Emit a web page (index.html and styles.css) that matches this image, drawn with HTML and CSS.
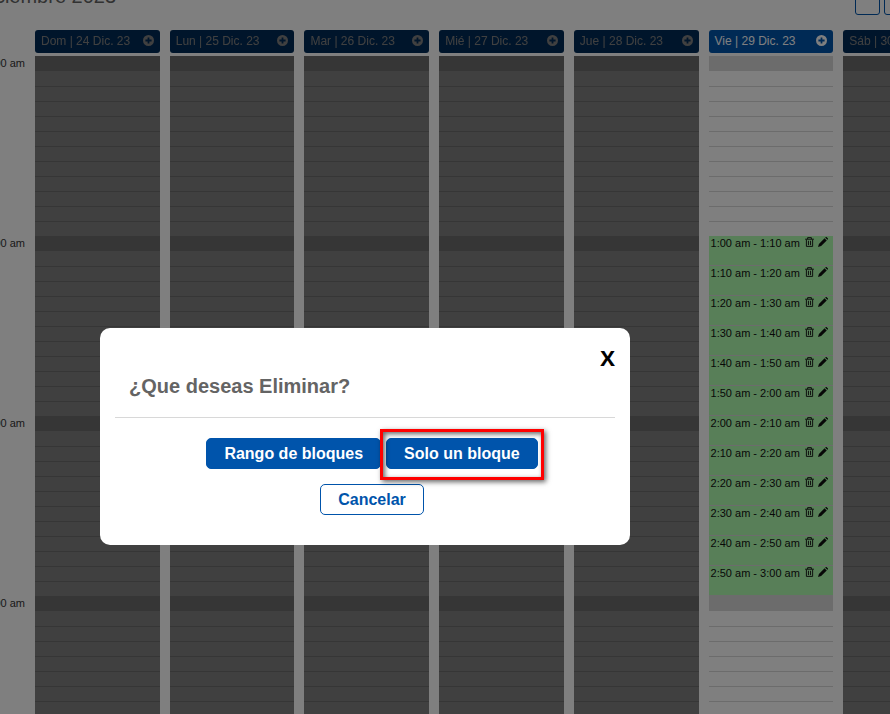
FILE: index.html
```html
<!DOCTYPE html>
<html lang="es">
<head>
    <meta charset="utf-8">
    <title>Agenda</title>
    <link rel="stylesheet" href="styles.css">
</head>
<body>
    <svg class="sprite" aria-hidden="true">
        <symbol id="plus" viewBox="0 0 16 16">
            <path fill-rule="evenodd" d="M8 0a8 8 0 1 0 0 16A8 8 0 0 0 8 0zM6.7 3.5h2.6v3.2h3.2v2.6H9.3v3.2H6.7V9.3H3.5V6.7h3.2z"/>
        </symbol>
        <symbol id="trash" viewBox="0 0 14 16">
            <path fill="none" stroke="currentColor" stroke-width="1.5" d="M0 3.5h14M4 3.5V1h6v2.5M2 4v11h10V4M5.3 6v7M8.7 6v7"/>
        </symbol>
        <symbol id="pencil" viewBox="0 0 16 16">
            <path d="M10.5 2L14 5.500 5 14.500 0 16l1.500-5zM11.500 1l1-1h1L16 2.500v1l-1 1z"/>
        </symbol>
    </svg>

    <div class="agenda">
        <div class="toolbar">
            <h1>Diciembre 2023</h1>
            <div class="toolbar-buttons">
                <button type="button" aria-label="Anterior"></button>
                <button type="button" aria-label="Siguiente"></button>
                <button type="button" aria-label="Hoy"></button>
                <button type="button" aria-label="Mes"></button>
            </div>
        </div>
        <div class="calendar">
            <div class="hours">
                <span>12:00 am</span>
                <span>1:00 am</span>
                <span>2:00 am</span>
                <span>3:00 am</span>
            </div>
            <div class="week" id="week"></div>
        </div>
    </div>

    <div class="overlay">
        <div class="modal" role="dialog" aria-modal="true" aria-labelledby="modal-title">
            <button type="button" class="close">X</button>
            <h2 id="modal-title">¿Que deseas Eliminar?</h2>
            <div class="modal-buttons">
                <button type="button" class="btn">Rango de bloques</button>
                <span class="highlight"><button type="button" class="btn">Solo un bloque</button></span>
                <button type="button" class="btn btn-outline">Cancelar</button>
            </div>
        </div>
    </div>

    <script src="script.js"></script>
</body>
</html>
```
FILE: styles.css
```css
* {
    box-sizing: border-box;
}
body {
    margin: 0;
    height: 100vh;
    overflow: hidden;
    background: white;
    font-family: "Liberation Sans", Arial, sans-serif;
}
button {
    font-family: inherit;
    cursor: pointer;
}
.sprite {
    display: none;
}

/* Calendar */
.agenda {
    min-width: 992px;
    margin: -16px 0 0 -24px;
}
.toolbar {
    display: flex;
    justify-content: space-between;
    height: 31px;
    margin-bottom: 15px;
    padding-right: 1px;
}
.toolbar h1 {
    margin: 0;
    font-size: 20px;
    line-height: 24px;
    font-weight: normal;
    color: #646464;
}
.toolbar-buttons {
    display: flex;
    gap: 4px;
}
.toolbar-buttons button {
    width: 25px;
    background: white;
    border: 1px solid #0054ab;
    border-radius: 3px;
}
.calendar {
    display: flex;
}
.hours {
    width: 59px;
    padding: 26px 10px 0 0;
    text-align: right;
    font-size: 11px;
    line-height: 15px;
    color: #333;
}
.hours span {
    display: block;
    height: 180px;
}
.week {
    flex: 1;
    display: grid;
    grid-template-columns: repeat(7, 1fr);
    gap: 10px;
}
.day.disabled {
    filter: brightness(0.5);
}
.day-header {
    display: flex;
    justify-content: space-between;
    align-items: center;
    height: 23px;
    margin-bottom: 3px;
    padding: 0 6px 2px;
    border-radius: 3px;
    background: #0054ab;
    color: white;
    font-size: 12px;
}
.day-header button,
.block button {
    display: flex;
    padding: 0;
    border: 0;
    background: none;
    color: inherit;
}
.day-header svg {
    width: 11px;
    height: 11px;
    fill: currentColor;
}
.slot {
    height: 15px;
    border-top: 1px solid #d8d8d8;
    background: white;
}
.slot.hour {
    background: #d8d8d8;
}
.slot.hour + .slot {
    border-top-color: white;
}
.block {
    display: flex;
    align-items: flex-start;
    height: 30px;
    padding-left: 2px;
    border-bottom: 1px solid #d8d8d8;
    background: #b0ffb0;
    font-size: 11px;
    line-height: 15px;
    color: #111;
}
.block button {
    margin: 1px 0 0 4px;
}
.block span + button {
    margin-left: 5px;
}
.block svg {
    width: 10px;
    height: 10px;
    fill: currentColor;
}
.block span + button svg {
    width: 9px;
}

/* Modal */
.overlay {
    position: fixed;
    inset: 0;
    padding: 328px 0 0 100px;
    background: rgba(0, 0, 0, 0.5);
}
.modal {
    display: flex;
    flex-direction: column;
    max-width: 530px;
    padding: 15px 15px 30px;
    border-radius: 10px;
    background: white;
}
.close {
    align-self: flex-end;
    margin-bottom: 4px;
    padding: 0;
    border: 0;
    background: none;
    color: black;
    font-family: "Open Sans", sans-serif;
    font-size: 22px;
    line-height: 28px;
    font-weight: bold;
}
.modal h2 {
    margin: 0;
    padding: 0 14px 19px;
    border-bottom: 1px solid #d8d8d8;
    font-size: 20px;
    line-height: 23px;
    color: #646464;
}
.modal-buttons {
    display: flex;
    flex-wrap: wrap;
    justify-content: center;
    gap: 15px 5px;
    padding: 20px 70px 0 84px;
}
.btn {
    height: 31px;
    padding: 0 17px;
    border: 1px solid #0054ab;
    border-radius: 5px;
    background: #0054ab;
    color: white;
    font-size: 16px;
    font-weight: bold;
}
.btn-outline {
    background: white;
    color: #0054ab;
}
.highlight {
    position: relative;
}
.highlight::after {
    content: "";
    position: absolute;
    inset: -9px -6px -11px -6px;
    border: 3px solid #ff0000;
    box-shadow: 2px 2px 5px rgba(0, 0, 0, 0.6), inset 2px 2px 5px rgba(0, 0, 0, 0.6);
    pointer-events: none;
}
```
FILE: script.js
```js
const days = ['Dom | 24', 'Lun | 25', 'Mar | 26', 'Mié | 27', 'Jue | 28', 'Vie | 29', 'Sáb | 30'];
const activeDay = 5;
const slotsPerHour = 12;

function formatTime(minutes) {
    return Math.floor(minutes / 60) + ':' + String(minutes % 60).padStart(2, '0') + ' am';
}

function slots(hours) {
    let html = '';
    for (let i = 0; i < hours * slotsPerHour; i++) {
        html += `<div class="slot ${i % slotsPerHour === 0 ? 'hour' : ''}"></div>`;
    }
    return html;
}

// 10 minute blocks between 1:00 am and 3:00 am
function blocks() {
    let html = '';
    for (let t = 60; t < 180; t += 10) {
        html += `<div class="block">
            <span>${formatTime(t)} - ${formatTime(t + 10)}</span>
            <button type="button" aria-label="Eliminar"><svg><use href="#trash"/></svg></button>
            <button type="button" aria-label="Editar"><svg><use href="#pencil"/></svg></button>
        </div>`;
    }
    return html;
}

document.getElementById('week').innerHTML = days.map((day, i) => `
    <div class="day ${i === activeDay ? '' : 'disabled'}">
        <div class="day-header">
            <span>${day} Dic. 23</span>
            <button type="button" aria-label="Agregar"><svg><use href="#plus"/></svg></button>
        </div>
        ${i === activeDay ? slots(1) + blocks() + slots(1) : slots(4)}
    </div>`).join('');
```
